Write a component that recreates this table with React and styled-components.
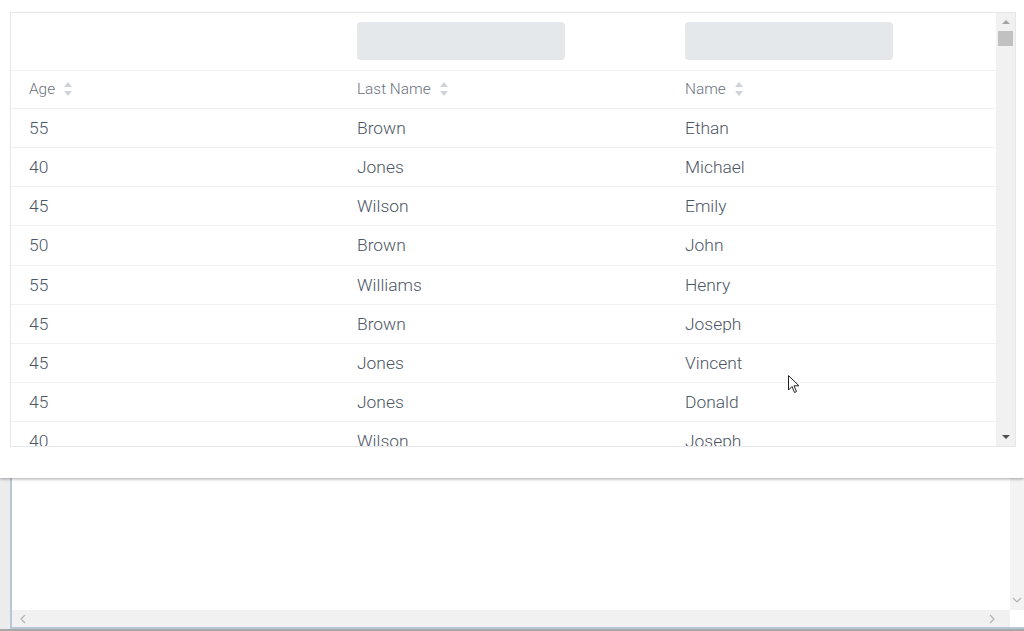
import React from "react";
import styled, { createGlobalStyle } from "styled-components";

const rows = [
  { age: 55, last: "Brown", name: "Ethan" },
  { age: 40, last: "Jones", name: "Michael" },
  { age: 45, last: "Wilson", name: "Emily" },
  { age: 50, last: "Brown", name: "John" },
  { age: 55, last: "Williams", name: "Henry" },
  { age: 45, last: "Brown", name: "Joseph" },
  { age: 45, last: "Jones", name: "Vincent" },
  { age: 45, last: "Jones", name: "Donald" },
  { age: 40, last: "Wilson", name: "Joseph" },
];

const columns = [
  { key: "age", title: "Age", filter: false },
  { key: "last", title: "Last Name", filter: true },
  { key: "name", title: "Name", filter: true },
];

const GlobalStyle = createGlobalStyle`
  html, body {
    margin: 0;
    padding: 0;
    background: #ffffff;
    overflow: hidden;
  }
  body {
    font-family: Roboto, "Liberation Sans", sans-serif;
  }
`;

const Screen = styled.div`
  position: relative;
  width: 1024px;
  height: 631px;
  overflow: hidden;
  background: #ffffff;
`;

// the window that sits under the popup
const Backdrop = styled.div`
  display: flex;
  flex-direction: column;
  height: 100%;
`;
const BackdropMain = styled.div`
  flex: 1;
  display: flex;
`;
const SideStrip = styled.div`
  width: 10px;
  background: #ececec;
`;
const Frame = styled.div`
  flex: 1;
  display: flex;
  flex-direction: column;
  border-left: 2px solid #b8c7d6;
  border-bottom: 2px solid #b8c7d6;
  background: #fff;
`;
const FrameBody = styled.div`
  flex: 1;
  display: flex;
`;
const FrameContent = styled.div`
  flex: 1;
`;
const FrameVScroll = styled.div`
  width: 14px;
  background: #f3f3f3;
  display: flex;
  flex-direction: column;
  justify-content: flex-end;
  align-items: center;
  padding-bottom: 6px;
`;
const FrameHScroll = styled.div`
  height: 17px;
  margin-right: 14px;
  background: #f1f1f1;
  display: flex;
  justify-content: space-between;
  align-items: center;
  padding: 0 14px 0 7px;
`;
const BottomEdge = styled.div`
  height: 2px;
  background: #a8a8a8;
`;

const Chevron = ({ dir }) => {
  const d = {
    left: "M6 1 L2 5 L6 9",
    right: "M2 1 L6 5 L2 9",
    down: "M1 2 L5 6 L9 2",
  }[dir];
  const down = dir === "down";
  return (
    <svg width={down ? 10 : 8} height={down ? 8 : 10} viewBox={down ? "0 0 10 8" : "0 0 8 10"}>
      <path d={d} fill="none" stroke="#b4b4b4" strokeWidth="1.2" />
    </svg>
  );
};

const Popup = styled.div`
  position: absolute;
  top: 0;
  left: 0;
  width: 1024px;
  height: 478px;
  background: #ffffff;
  box-shadow: 0 1px 3px rgba(0, 0, 0, 0.35);
  padding: 12px 8px 0 10px;
  box-sizing: border-box;
`;

const TableBox = styled.div`
  height: 435px;
  display: flex;
  border: 1px solid #e5e7eb;
  box-sizing: border-box;
  overflow: hidden;
`;

const TableArea = styled.div`
  width: 985px;
  overflow: hidden;
`;

const Row = styled.div`
  display: grid;
  grid-template-columns: 328px 328px 329px;
  height: ${(p) => p.$h}px;
  border-top: ${(p) => (p.$first ? "none" : "1px solid #eef0f2")};
  box-sizing: border-box;
`;

const Cell = styled.div`
  display: flex;
  align-items: center;
  padding-left: 18px;
  padding-bottom: ${(p) => (p.$head ? "2px" : "0")};
  font-size: ${(p) => (p.$head ? "15.4px" : "17.4px")};
  font-weight: 300;
  color: ${(p) => (p.$head ? "#6b7280" : "#4b5563")};
  white-space: nowrap;
  gap: 8px;
`;

const FilterCell = styled.div`
  display: flex;
  align-items: flex-start;
  padding: 9px 0 0 18px;
`;

const Skeleton = styled.div`
  width: 208px;
  height: 38px;
  border-radius: 4px;
  background: #e5e8eb;
`;

const SortIcon = () => (
  <svg width="10" height="16" viewBox="0 0 10 16">
    <path d="M5 1 L9 6 H1 Z" fill="#cfd3d9" />
    <path d="M5 15 L9 10 H1 Z" fill="#cfd3d9" />
  </svg>
);

const VScroll = styled.div`
  width: 19px;
  background: #f1f1f1;
  display: flex;
  flex-direction: column;
  align-items: center;
  padding: 7px 0 7px;
  box-sizing: border-box;
`;
const Arrow = styled.div`
  width: 0;
  height: 0;
  border-left: 4px solid transparent;
  border-right: 4px solid transparent;
  ${(p) =>
    p.$down
      ? "border-top: 4px solid #505050; margin-top: auto;"
      : "border-bottom: 4px solid #a3a3a3;"}
`;
const Thumb = styled.div`
  width: 15px;
  height: 15px;
  margin-top: 7px;
  background: #c1c1c1;
`;

const Cursor = styled.svg`
  position: absolute;
  left: 788px;
  top: 375px;
`;

export default function App() {
  return (
    <>
      <GlobalStyle />
      <Screen>
        <Backdrop>
          <BackdropMain>
            <SideStrip />
            <Frame>
              <FrameBody>
                <FrameContent />
                <FrameVScroll>
                  <Chevron dir="down" />
                </FrameVScroll>
              </FrameBody>
              <FrameHScroll>
                <Chevron dir="left" />
                <Chevron dir="right" />
              </FrameHScroll>
            </Frame>
          </BackdropMain>
          <BottomEdge />
        </Backdrop>

        <Popup>
          <TableBox>
            <TableArea>
              <Row $h={57} $first>
                {columns.map((c) => (
                  <FilterCell key={c.key}>{c.filter && <Skeleton />}</FilterCell>
                ))}
              </Row>
              <Row $h={38}>
                {columns.map((c) => (
                  <Cell key={c.key} $head>
                    {c.title}
                    <SortIcon />
                  </Cell>
                ))}
              </Row>
              {rows.map((r, i) => (
                <Row $h={39.15} key={i}>
                  <Cell>{r.age}</Cell>
                  <Cell>{r.last}</Cell>
                  <Cell>{r.name}</Cell>
                </Row>
              ))}
            </TableArea>
            <VScroll>
              <Arrow />
              <Thumb />
              <Arrow $down />
            </VScroll>
          </TableBox>
        </Popup>

        <Cursor width="12" height="19" viewBox="0 0 12 19">
          <path
            d="M0.5 0.5 L0.5 15 L4 11.5 L6.5 17.5 L8.5 16.6 L6 10.8 L11 10.8 Z"
            fill="#ffffff"
            stroke="#222"
            strokeWidth="1"
          />
        </Cursor>
      </Screen>
    </>
  );
}
